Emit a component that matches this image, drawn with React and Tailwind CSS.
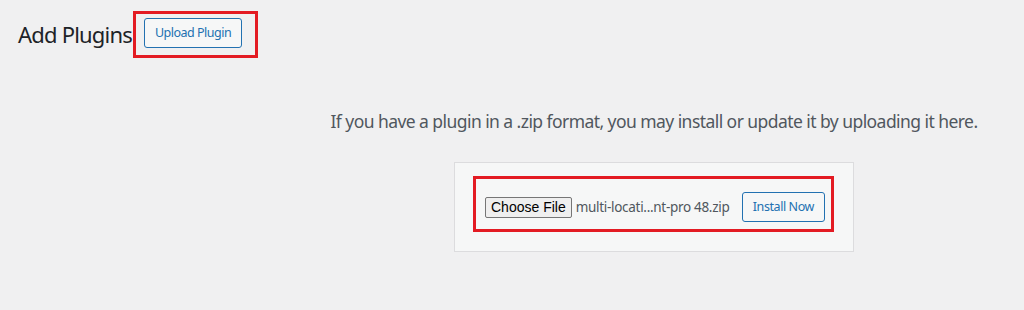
import React from "react";

const sans = { fontFamily: '"Noto Sans", "Open Sans", sans-serif' };

const UploadPluginPage = () => {
  return (
    <div className="w-full h-[310px] bg-[#f0f0f1] overflow-hidden" style={sans}>
      {/* title row */}
      <div className="flex items-center pt-[11px] pl-[18px]">
        <h1 className="text-[22px] leading-[29px] text-[#1d2327] font-normal tracking-[-0.8px] mr-[1px]">
          Add Plugins
        </h1>
        <div className="border-[3px] border-[#e31b23] pl-[8px] pr-[13px] pt-[4px] pb-[7px]">
          <button className="h-[30px] px-[10px] text-[12.5px] text-[#2271b1] bg-[#f6f7f7] border border-[#2271b1] rounded-[3px] tracking-[-0.5px]">
            Upload Plugin
          </button>
        </div>
      </div>

      {/* upload area */}
      <div className="flex flex-col items-center pl-[284px]">
        <p className="mt-[50px] text-[17.5px] leading-[27px] text-[#50575e] tracking-[-0.56px]">
          If you have a plugin in a .zip format, you may install or update it by uploading it here.
        </p>
        <div className="mt-[27px] w-[400px] h-[90px] bg-[#f6f7f7] border border-[#dcdcde] pt-[13px] pl-[18px] pr-[19px]">
          <div className="h-[56px] border-[3px] border-[#e31b23] pl-[9px] pr-[6px] pt-[13px] flex items-start justify-between">
            <div className="flex items-center h-[30px]">
              <span
                className="h-[21px] px-[5px] flex items-center text-[14px] text-black bg-[#efefef] border border-[#767676] rounded-[2px]"
                style={{ fontFamily: '"Liberation Sans", Arial, sans-serif' }}
              >
                Choose File
              </span>
              <span className="ml-[4px] text-[13.5px] text-[#50575e] tracking-[-0.3px]">
                multi-locati...nt-pro 48.zip
              </span>
            </div>
            <button className="h-[30px] px-[10px] text-[12.5px] text-[#2271b1] bg-[#f6f7f7] border border-[#2271b1] rounded-[3px] tracking-[-0.42px]">
              Install Now
            </button>
          </div>
        </div>
      </div>
    </div>
  );
};

export default function App() {
  return <UploadPluginPage />;
}
